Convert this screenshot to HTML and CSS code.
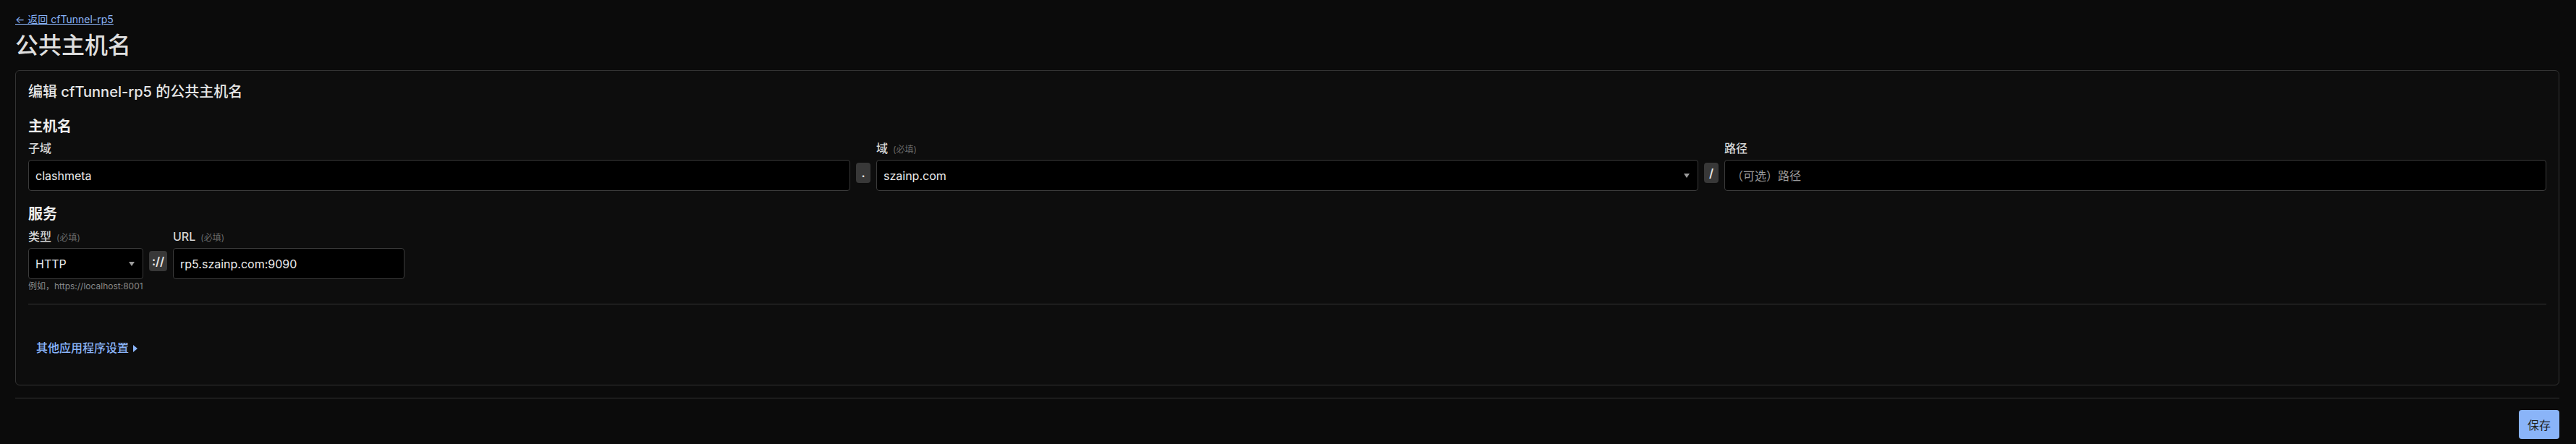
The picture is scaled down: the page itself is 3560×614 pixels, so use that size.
FILE: index.html
```html
<!DOCTYPE html>
<html lang="zh-CN">
<head>
    <meta charset="UTF-8">
    <meta name="viewport" content="width=device-width, initial-scale=1.0">
    <title>公共主机名</title>
    <link rel="stylesheet" href="styles.css">
</head>
<body>
    <div class="page">
        <a class="back" href="#">← 返回 cfTunnel-rp5</a>
        <h1>公共主机名</h1>

        <div class="card">
            <h2>编辑 cfTunnel-rp5 的公共主机名</h2>

            <h3>主机名</h3>
            <div class="host-row">
                <label class="label" for="subdomain">子域</label>
                <span></span>
                <label class="label">域<span class="req">(必填)</span></label>
                <span></span>
                <label class="label" for="path">路径</label>

                <input class="field" type="text" id="subdomain" value="clashmeta">
                <span class="addon">.</span>
                <div class="field select">
                    <span>szainp.com</span>
                    <span class="arrow"></span>
                </div>
                <span class="addon">/</span>
                <input class="field" type="text" id="path" placeholder="（可选）路径">
            </div>

            <h3 class="service">服务</h3>
            <div class="service-row">
                <label class="label">类型<span class="req">(必填)</span></label>
                <span></span>
                <label class="label" for="url">URL<span class="req">(必填)</span></label>

                <div class="field select">
                    <span>HTTP</span>
                    <span class="arrow"></span>
                </div>
                <span class="addon">://</span>
                <input class="field" type="text" id="url" value="rp5.szainp.com:9090">

                <div class="hint">例如，https://localhost:8001</div>
            </div>

            <div class="divider"></div>

            <div class="more">
                <a href="#" class="more-link">其他应用程序设置 <span class="caret"></span></a>
            </div>
        </div>

        <div class="rule"></div>

        <div class="actions">
            <button type="button" class="save">保存</button>
        </div>
    </div>
</body>
</html>
```

FILE: styles.css
```css
body {
    margin: 0;
    background: #0b0b0b;
    color: #e4e4e4;
    font-family: Inter, "Noto Sans CJK SC", sans-serif;
}

.page {
    padding: 17px 23px 6px 21px;
}

.back {
    display: block;
    width: fit-content;
    font-size: 14px;
    line-height: 20px;
    color: #8ab4f8;
    text-decoration: underline;
}

h1 {
    margin: 6px 0 14px 0;
    font-size: 32px;
    line-height: 40px;
    font-weight: 500;
    color: #dedede;
}

.card {
    border: 1px solid #333;
    border-radius: 6px;
    background: #0d0d0d;
    padding: 15px 17px 39px 17px;
}

h2 {
    margin: 0;
    font-size: 20px;
    line-height: 28px;
    font-weight: 500;
    color: #e6e6e6;
}

h3 {
    margin: 20px 0 4px 0;
    font-size: 20px;
    line-height: 28px;
    font-weight: 600;
    color: #ececec;
}

h3.service {
    margin-top: 18px;
    margin-bottom: 5px;
}

.host-row {
    display: grid;
    grid-template-columns: 1fr 20px 1fr 20px 1fr;
    column-gap: 8px;
    row-gap: 4px;
}

.service-row {
    display: grid;
    grid-template-columns: 159px 25px 320px;
    column-gap: 8px;
    row-gap: 4px;
}

.label {
    height: 24px;
    font-size: 16px;
    line-height: 24px;
    font-weight: 500;
    color: #d6d6d6;
}

.req {
    margin-left: 7px;
    font-size: 12px;
    line-height: 12px;
    font-weight: 400;
    color: #6a6a6a;
}

.field {
    box-sizing: border-box;
    height: 43px;
    margin: 0;
    padding: 0 9px;
    border: 1px solid #3b3b3b;
    border-radius: 4px;
    background: #000;
    color: #ececec;
    font-family: Inter, "Noto Sans CJK SC", sans-serif;
    font-size: 16px;
    outline: none;
    min-width: 0;
}

.field::placeholder {
    color: #9a9a9a;
}

.select {
    display: flex;
    align-items: center;
    justify-content: space-between;
    padding-right: 11px;
}

.arrow {
    width: 0;
    height: 0;
    border-left: 4px solid transparent;
    border-right: 4px solid transparent;
    border-top: 6px solid #9c9c9c;
}

.addon {
    align-self: start;
    margin-top: 4px;
    height: 28px;
    border-radius: 4px;
    background: #383838;
    color: #e8e8e8;
    font-size: 16px;
    font-weight: 600;
    line-height: 28px;
    text-align: center;
}

.hint {
    margin-top: -2px;
    font-size: 12px;
    line-height: 16px;
    color: #888;
    white-space: nowrap;
}

.divider {
    margin-top: 16px;
    border-top: 1px solid #333;
}

.more {
    margin-top: 48px;
    padding: 0 11px;
}

.more-link {
    font-size: 16px;
    line-height: 24px;
    font-weight: 500;
    color: #8ab4f8;
    text-decoration: none;
}

.caret {
    display: inline-block;
    width: 0;
    height: 0;
    margin-left: 2px;
    border-top: 5px solid transparent;
    border-bottom: 5px solid transparent;
    border-left: 6px solid #8ab4f8;
}

.rule {
    margin-top: 17px;
    border-top: 1px solid #333;
}

.actions {
    display: flex;
    justify-content: flex-end;
    margin-top: 16px;
}

.save {
    width: 56px;
    height: 40px;
    border: none;
    border-radius: 4px;
    background: #8ab4f8;
    color: #1e1e1e;
    font-family: Inter, "Noto Sans CJK SC", sans-serif;
    font-size: 16px;
    cursor: pointer;
}
```
